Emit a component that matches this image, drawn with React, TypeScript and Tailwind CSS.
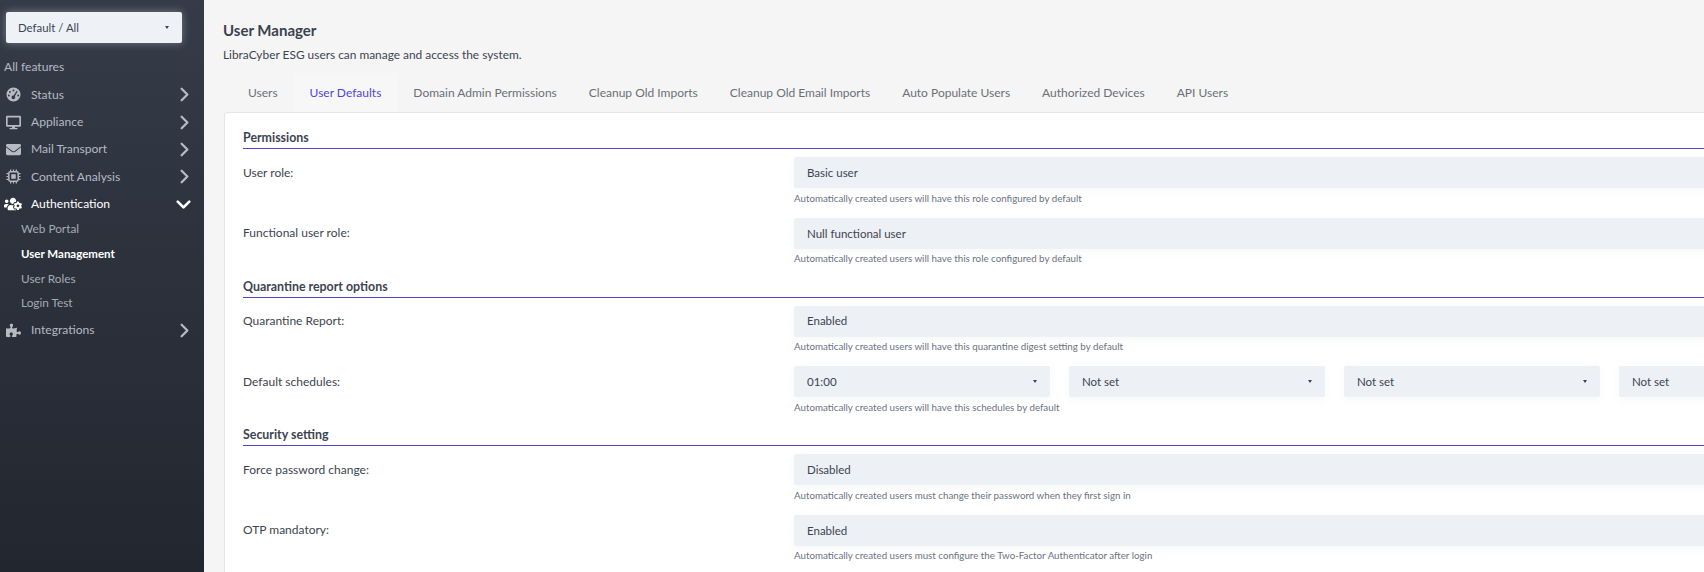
import React from "react";
import { FaDesktop, FaEnvelope, FaUsersCog, FaPuzzlePiece } from "react-icons/fa";
import { ChevronRight, ChevronDown } from "lucide-react";

const Gauge = () => (
  <svg width="15" height="15" viewBox="0 0 16 16">
    <path
      fillRule="evenodd"
      fill="currentColor"
      d="M8 0.5a7.5 7.5 0 1 1 0 15a7.5 7.5 0 0 1 0-15zM8 2.6a1 1 0 1 0 0 2a1 1 0 0 0 0-2zM4.2 4.2a1 1 0 1 0 0 2a1 1 0 0 0 0-2zM11.5 4.1l-3.4 5a1.9 1.9 0 1 0 1.3.8l3-5.2zM3 8a1 1 0 1 0 0 2a1 1 0 0 0 0-2zM13 8a1 1 0 1 0 0 2a1 1 0 0 0 0-2z"
    />
  </svg>
);

const Chip = () => (
  <svg width="15" height="15" viewBox="0 0 16 16" fill="none" stroke="currentColor">
    <rect x="3" y="3" width="10" height="10" rx="1.5" strokeWidth="1.6" />
    <rect x="5.6" y="5.6" width="4.8" height="4.8" fill="currentColor" stroke="none" />
    <path d="M5 0.5v2M8 0.5v2M11 0.5v2M5 13.5v2M8 13.5v2M11 13.5v2M0.5 5h2M0.5 8h2M0.5 11h2M13.5 5h2M13.5 8h2M13.5 11h2" strokeWidth="1.3" />
  </svg>
);

const Caret = () => (
  <span className="block h-0 w-0 border-x-[2.5px] border-t-[3px] border-x-transparent border-t-[#3d4451]" />
);

function NavItem({ icon, label, open }: { icon: React.ReactNode; label: string; open?: boolean }) {
  return (
    <div className={`flex h-[27.4px] items-center pl-[6px] pr-[13px] text-[12.1px] ${open ? "text-white" : "text-[#b5bac3]"}`}>
      <span className="flex w-[25px] shrink-0 items-center">{icon}</span>
      <span className="flex-1">{label}</span>
      {open ? (
        <ChevronDown size={23} strokeWidth={2.8} className="-mr-[4px] text-white" />
      ) : (
        <ChevronRight size={23} strokeWidth={2.4} className="-mr-[5px] text-[#b5bac3]" />
      )}
    </div>
  );
}

function SubItem({ label, active }: { label: string; active?: boolean }) {
  return (
    <div className={`flex h-[24.6px] items-center pl-[21px] ${active ? "text-[11.5px] font-bold text-white" : "text-[11.8px] text-[#a5aab3]"}`}>
      {label}
    </div>
  );
}

function Select({ value, caret, narrow }: { value: string; caret?: boolean; narrow?: boolean }) {
  return (
    <div className={`flex h-[31px] items-center justify-between rounded-[2px] bg-[#edf0f5] px-[13px] text-[11.5px] text-[#3d4451] shadow-[0_3px_8px_rgba(60,70,90,0.04)] ${narrow ? "w-[256px] shrink-0" : "w-full"}`}>
      <span>{value}</span>
      {caret && <Caret />}
    </div>
  );
}

function Help({ text }: { text: string }) {
  return <div className="flex h-[20px] items-center text-[9.75px] text-[#6b7280]">{text}</div>;
}

function Row({ label, help, children }: { label: string; help: string; children: React.ReactNode }) {
  return (
    <div className="flex h-[60.75px] items-start">
      <div className="flex h-[31px] w-[551px] shrink-0 items-center text-[12px] text-[#3d4451]">
        <span>{label}</span>
      </div>
      <div className="w-[1081px] shrink-0">
        {children}
        <Help text={help} />
      </div>
    </div>
  );
}

function Section({ title, children }: { title: string; children: React.ReactNode }) {
  return (
    <section>
      <h3 className="box-content h-[18px] border-b border-[#5045d8] text-[12.4px] leading-[15px] font-bold text-[#3d4451]">
        {title}
      </h3>
      <div className="pt-[8px]">{children}</div>
    </section>
  );
}

const tabs = [
  "Users",
  "User Defaults",
  "Domain Admin Permissions",
  "Cleanup Old Imports",
  "Cleanup Old Email Imports",
  "Auto Populate Users",
  "Authorized Devices",
  "API Users",
];

export default function App() {
  return (
    <div className="flex h-[572px] w-[1704px] overflow-hidden bg-[#f5f5f5] font-['Lato','Noto_Sans',sans-serif]">
      <aside className="h-full w-[204px] shrink-0 bg-gradient-to-b from-[#353c48] to-[#22262f]">
        <div className="pl-[6px] pt-[12px]">
          <div className="flex h-[31px] w-[176px] items-center justify-between rounded-[2px] bg-[#eef1f6] pl-[12px] pr-[13px] text-[11.4px] text-[#3d4451] shadow-[0_0_8px_rgba(255,255,255,0.35)]">
            <span>Default / All</span>
            <Caret />
          </div>
        </div>
        <div className="mt-[12px] flex h-[24px] items-center pl-[4px] text-[12.1px] text-[#b5bac3]">All features</div>
        <div className="mt-[2px]">
          <NavItem icon={<Gauge />} label="Status" />
          <NavItem icon={<FaDesktop size={15} />} label="Appliance" />
          <NavItem icon={<FaEnvelope size={15} />} label="Mail Transport" />
          <NavItem icon={<Chip />} label="Content Analysis" />
          <NavItem icon={<FaUsersCog size={18} className="-ml-[2px]" />} label="Authentication" open />
          <div className="-mt-[1px] mb-[1px]">
            <SubItem label="Web Portal" />
            <SubItem label="User Management" active />
            <SubItem label="User Roles" />
            <SubItem label="Login Test" />
          </div>
          <NavItem icon={<FaPuzzlePiece size={15} />} label="Integrations" />
        </div>
      </aside>

      <main className="min-w-0 flex-1 pl-[20px]">
        <h1 className="-ml-[1px] pt-[20px] text-[15px] leading-[20px] font-bold text-[#3a4150]">User Manager</h1>
        <p className="-ml-[1px] pt-[6px] text-[11.9px] leading-[18px] text-[#3d4451]">LibraCyber ESG users can manage and access the system.</p>
        <nav className="mt-[9px] flex h-[39px] items-center pl-[8px]">
          {tabs.map((t) => (
            <span
              key={t}
              className={`flex h-full items-center px-[16px] text-[12px] ${t === "User Defaults" ? "bg-[#f7f7f7] text-[#5046d8]" : "text-[#6b7078]"}`}
            >
              {t}
            </span>
          ))}
        </nav>
        <div className="h-[500px] w-[1650px] rounded-tl-[3px] border border-[#e4e5e7] bg-white pl-[18px] pt-[17px]">
          <Section title="Permissions">
            <Row label="User role:" help="Automatically created users will have this role configured by default">
              <Select value="Basic user" />
            </Row>
            <Row label="Functional user role:" help="Automatically created users will have this role configured by default">
              <Select value="Null functional user" />
            </Row>
          </Section>
          <Section title="Quarantine report options">
            <Row label="Quarantine Report:" help="Automatically created users will have this quarantine digest setting by default">
              <Select value="Enabled" />
            </Row>
            <Row label="Default schedules:" help="Automatically created users will have this schedules by default">
              <div className="flex gap-[19px]">
                <Select value="01:00" caret narrow />
                <Select value="Not set" caret narrow />
                <Select value="Not set" caret narrow />
                <Select value="Not set" caret narrow />
              </div>
            </Row>
          </Section>
          <Section title="Security setting">
            <Row label="Force password change:" help="Automatically created users must change their password when they first sign in">
              <Select value="Disabled" />
            </Row>
            <Row label="OTP mandatory:" help="Automatically created users must configure the Two-Factor Authenticator after login">
              <Select value="Enabled" />
            </Row>
          </Section>
        </div>
      </main>
    </div>
  );
}
